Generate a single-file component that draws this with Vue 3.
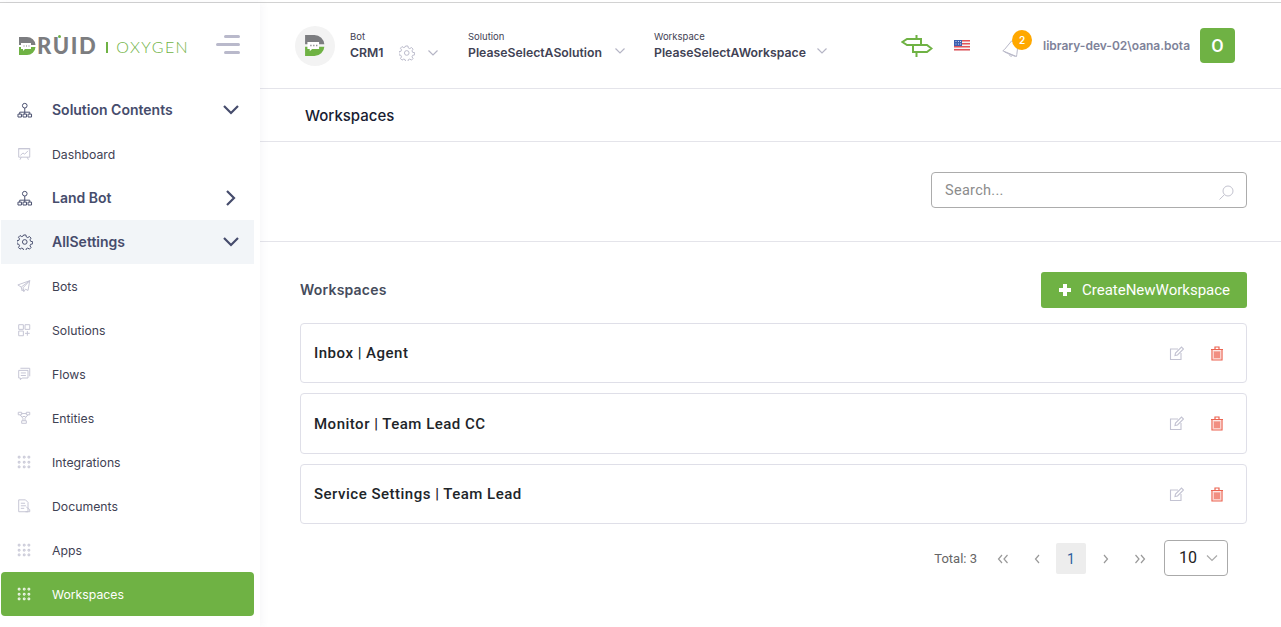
<script setup>
const icons = {
  org: 'M8 6.200a2.400 2.400 0 1 0 0-4.800a2.400 2.400 0 0 0 0 4.800zM8 6.200v4.300M2.800 12.500v-2h10.400v2M8 10.500v2M1 12.500h3.600v3H1zM6.200 12.500h3.600v3H6.200zM11.400 12.500H15v3h-3.600z',
  board: 'M2 2h13v10H2zM1.500 2h14M4 10l3-3 2 1.500L13 4.500M5 12l-1.500 3M12 12l1.500 3',
  gear: 'M6.800 1h2.400l.4 2 1.500.7 1.800-1.100 1.600 1.700-1.100 1.700.7 1.600 2 .3v2.300l-2 .4-.7 1.600 1.100 1.700-1.600 1.700-1.800-1.100-1.500.7-.4 2H6.800l-.4-2-1.500-.7-1.800 1.100-1.600-1.700 1.100-1.700-.7-1.600-2-.4V6.900l2-.3.7-1.600-1.100-1.700 1.600-1.700 1.800 1.100 1.500-.7zM8 10.600a2.400 2.400 0 1 0 0-4.800a2.400 2.400 0 0 0 0 4.800z',
  plane: 'M15 2 1 7l4 2.500L15 2 7 10.500l1 4.500 2-3 3 1.500zM5 9.500l1 4.500 2-2.500',
  grid: 'M2 2h5.500v5.500H2zM9.500 2H15v5.500H9.500zM2 9.500h5.500V15H2zM12.200 9.500V15M9.500 12.200H15',
  flow: 'M4 1.500h11v9.500M2 4h11v9H6l-2 2v-2H2zM4.500 7h6M4.500 10h6',
  entity: 'M1.500 1.500h4v3h-4zM11 1.500h4v3h-4zM5.500 3h5.500M3.500 4.500l3.500 4v3M13 4.500l-3.500 4v3M5.500 11.500h5.500v3H5.500zM6.500 6.500h3.500',
  dots: 'M1.500 1.500h2v2h-2zM7.500 1.500h2v2h-2zM13 1.500h2v2h-2zM1.500 7.500h2v2h-2zM7.500 7.500h2v2h-2zM13 7.500h2v2h-2zM1.500 13h2v2h-2zM7.500 13h2v2h-2zM13 13h2v2h-2z',
  doc: 'M2 1h8l3 3v11H2zM4.500 5h5M4.500 8h6M4.500 11h4M11 9.500l4 3v2.500h-5'
}

const menu = [
  { label: 'Solution Contents', icon: 'org', kind: 'group', arrow: 'down' },
  { label: 'Dashboard', icon: 'board' },
  { label: 'Land Bot', icon: 'org', kind: 'group', arrow: 'right' },
  { label: 'AllSettings', icon: 'gear', kind: 'group open', arrow: 'down' },
  { label: 'Bots', icon: 'plane' },
  { label: 'Solutions', icon: 'grid' },
  { label: 'Flows', icon: 'flow' },
  { label: 'Entities', icon: 'entity' },
  { label: 'Integrations', icon: 'dots' },
  { label: 'Documents', icon: 'doc' },
  { label: 'Apps', icon: 'dots' },
  { label: 'Workspaces', icon: 'dots', kind: 'active' }
]

const workspaces = ['Inbox | Agent', 'Monitor | Team Lead CC', 'Service Settings | Team Lead']
const arrowPaths = { down: 'M2 5l7 7 7-7', right: 'M5 2l7 7-7 7' }
</script>

<template>
  <div class="page">
    <div class="frame">
      <aside class="sidebar">
        <div class="brand">
          <div class="logo">
            <svg class="logo-d" viewBox="0 0 17 18" width="17" height="18">
              <path d="M0 0h8a8.500 8.500 0 0 1 8.500 8H0z" fill="#7c7d80" />
              <path d="M0 10h16.500A8.500 8.500 0 0 1 8 18H0z" fill="#6fb244" />
              <path d="M2 6h10v6H6l-2 2v-2H2z" fill="#fff" />
              <path d="M4.500 9h1M7 9h1M9.500 9h1" stroke="#7c7d80" stroke-width="1.200" />
            </svg>
            <span class="logo-word">RUID<i class="logo-dot"></i></span>
            <span class="logo-bar"></span>
            <span class="logo-sub">OXYGEN</span>
          </div>
          <div class="burger"><span class="short"></span><span></span><span class="short"></span></div>
        </div>
        <nav>
          <a v-for="item in menu" :key="item.label" class="item" :class="item.kind">
            <svg class="item-icon" viewBox="0 0 16.500 16.500" width="16" height="16"><path :d="icons[item.icon]" /></svg>
            <span class="item-label">{{ item.label }}</span>
            <svg v-if="item.arrow" class="item-arrow" viewBox="0 0 18 18" width="18" height="18"><path :d="arrowPaths[item.arrow]" /></svg>
          </a>
        </nav>
      </aside>

      <main class="main">
        <header class="topbar">
          <div class="bot-avatar">
            <svg viewBox="0 0 17 18" width="20" height="21">
              <path d="M0 0h8a8.500 8.500 0 0 1 8.500 8H0z" fill="#7c7d80" />
              <path d="M0 10h16.500A8.500 8.500 0 0 1 8 18H0z" fill="#6fb244" />
              <path d="M2 6h10v6H6l-2 2v-2H2z" fill="#fff" />
              <path d="M4.500 9h1M7 9h1M9.500 9h1" stroke="#7c7d80" stroke-width="1.200" />
            </svg>
          </div>
          <div class="picker bot">
            <small>Bot</small><b>CRM1</b>
          </div>
          <svg class="top-gear" viewBox="0 0 16.500 16.500" width="16" height="16"><path :d="icons.gear" /></svg>
          <svg class="chev first" viewBox="0 0 12 8" width="12" height="8"><path d="M1.500 1.500l4.500 4.500 4.500-4.500" /></svg>
          <div class="picker solution">
            <small>Solution</small><b>PleaseSelectASolution</b>
          </div>
          <svg class="chev" viewBox="0 0 12 8" width="12" height="8"><path d="M1.500 1.500l4.500 4.500 4.500-4.500" /></svg>
          <div class="picker workspace">
            <small>Workspace</small><b>PleaseSelectAWorkspace</b>
          </div>
          <svg class="chev" viewBox="0 0 12 8" width="12" height="8"><path d="M1.500 1.500l4.500 4.500 4.500-4.500" /></svg>

          <svg class="sign" viewBox="0 0 32 24" width="32" height="24">
            <path d="M15.500 1v4M15.500 17v6M6 5h14v6H6L1.500 8zM12 11h14l4.500 3.500L26 18H12z" />
          </svg>
          <svg class="flag" viewBox="0 0 16 11" width="16" height="11">
            <rect width="16" height="11" fill="#f4f4f4" />
            <path d="M0 .8h16M0 3.800h16M0 6.800h16M0 9.800h16" stroke="#e2535a" stroke-width="1.500" />
            <rect width="8" height="6" fill="#3c5fb0" />
            <path d="M1.500 1.500h1M4 1.500h1M6 1.500h1M1.500 4h1M4 4h1M6 4h1" stroke="#dfe6f7" stroke-width=".9" />
          </svg>
          <div class="bell">
            <svg viewBox="0 0 20 20" width="20" height="20">
              <path d="M9.500 4 2.500 12.500.8 13.800 14.500 19.500l.3-2 .8-6.500c.3-2.500-.5-4.500-2.500-5.700-1.600-1-3.300-.6-3.600-1.300zM2.500 15l11 4.500M7 17.500c.5 1.300 1.800 2 3 1.500" />
            </svg>
            <span class="badge">2</span>
          </div>
          <span class="username">library-dev-02\oana.bota</span>
          <div class="user-box">O</div>
        </header>

        <div class="title-row">Workspaces</div>

        <div class="search-row">
          <div class="search">
            <span>Search...</span>
            <svg viewBox="0 0 16 16" width="16" height="16"><path d="M10 11a5 5 0 1 0 0-10a5 5 0 0 0 0 10zM6.300 9.800 1.500 14.500" /></svg>
          </div>
        </div>

        <section class="content">
          <div class="content-head">
            <h2>Workspaces</h2>
            <button class="create">
              <svg viewBox="0 0 14 14" width="14" height="14"><path d="M5 1h4v4h4v4H9v4H5V9H1V5h4z" fill="#fff" /></svg>
              CreateNewWorkspace
            </button>
          </div>
          <div v-for="name in workspaces" :key="name" class="card">
            <span class="card-name">{{ name }}</span>
            <svg class="edit" viewBox="0 0 15 15" width="15" height="15"><path d="M9 3H1.500v10.500H12V7M6 9.500l.5-2.500L12.500 1l2 2-6 6z" /></svg>
            <svg class="trash" viewBox="0 0 12 15" width="12" height="15"><path class="bars" d="M2 4.500h8v9H2z" /><path d="M1 3.500h10V14H1zM0 3.500h12M4 3.500V1h4v2.500M4 5.500v6.500M6 5.500v6.500M8 5.500v6.500" /></svg>
          </div>
          <div class="pager">
            <span class="total">Total: 3</span>
            <svg class="pg first-pg" viewBox="0 0 12 10" width="12" height="10"><path d="M5 1 1.500 5 5 9M10.500 1 7 5l3.500 4" /></svg>
            <svg class="pg prev" viewBox="0 0 6 10" width="6" height="10"><path d="M5 1 1.500 5 5 9" /></svg>
            <span class="current">1</span>
            <svg class="pg next" viewBox="0 0 6 10" width="6" height="10"><path d="M1 1l3.500 4L1 9" /></svg>
            <svg class="pg last" viewBox="0 0 12 10" width="12" height="10"><path d="M1.500 1 5 5 1.500 9M7 1l3.500 4L7 9" /></svg>
            <div class="size">
              <span>10</span>
              <svg viewBox="0 0 12 8" width="12" height="8"><path d="M1 1.500l5 5 5-5" /></svg>
            </div>
          </div>
        </section>
      </main>
    </div>
  </div>
</template>

<style>
html, body { margin: 0; overflow: hidden; background: #fff; }
</style>

<style scoped>
.page {
  width: 1281px;
  height: 627px;
  box-sizing: border-box;
  padding-top: 2px;
  overflow: hidden;
  font-family: Inter, "Liberation Sans", sans-serif;
  background: #fff;
}
.frame {
  height: 625px;
  box-sizing: border-box;
  border-top: 1px solid #d2d2d2;
  display: flex;
}
.sidebar {
  width: 260px;
  flex: none;
  padding-left: 1px;
  box-sizing: border-box;
  background: #fff;
  box-shadow: 2px 0 8px rgba(80, 80, 110, .05);
  position: relative;
}
.brand {
  height: 85px;
  display: flex;
  align-items: center;
  justify-content: space-between;
  padding: 0 20px 0 18px;
}
.logo { display: flex; align-items: center; margin-top: 1px; }
.logo-d { display: block; }
.logo-word {
  position: relative;
  font: 900 22px/22px Lato, sans-serif;
  letter-spacing: 1.600px;
  color: #7c7d80;
  margin-left: 1px;
}
.logo-dot {
  position: absolute;
  left: 21px;
  top: 0;
  width: 3px;
  height: 3px;
  background: #6fb244;
  border-radius: 50%;
}
.logo-bar { width: 2px; height: 11px; background: #6fb244; margin: 3px 8px 0 9px; }
.logo-sub {
  font: 300 16px/20px Lato, sans-serif;
  letter-spacing: 1.400px;
  color: #6fb244;
  margin-top: 2px;
}
.burger { display: flex; flex-direction: column; align-items: flex-end; gap: 5px; width: 24px; margin-top: -2px; }
.burger span { display: block; height: 3px; width: 24px; background: #b9b9cb; border-radius: 2px; }
.burger .short { width: 16px; }
.item {
  width: 253px;
  height: 44px;
  display: flex;
  align-items: center;
  padding-left: 16px;
  box-sizing: border-box;
  border-radius: 4px;
  font-size: 12.250px;
  color: #3f4254;
}
.item-icon { flex: none; width: 14px; height: 14px; margin-right: 2px; }
.item-icon path { fill: none; stroke: #c4c4d4; stroke-width: 1.150; }
.item-label { margin-left: 19px; flex: 1; }
.item-arrow { margin-right: 14px; }
.item-arrow path { fill: none; stroke: #464c6c; stroke-width: 2.200; }
.group { font-size: 14px; font-weight: 600; color: #464c6c; }
.group .item-icon { width: 16px; height: 16px; margin-right: 0; }
.group .item-icon path { stroke: #464c6c; stroke-width: 1; }
.group .item-label { margin-top: -2px; }
.open { background: #f2f5f8; border-radius: 0; }
.active { background: #6fb244; color: #fff; }
.active .item-icon path { stroke: #fff; stroke-width: 1.150; }

.main { flex: 1; min-width: 0; }
.topbar {
  height: 86px;
  box-sizing: border-box;
  border-bottom: 1px solid #e4e4ea;
  display: flex;
  align-items: center;
  padding-left: 35px;
}
.bot-avatar {
  width: 40px;
  height: 40px;
  border-radius: 50%;
  background: #f3f3f3;
  display: flex;
  align-items: center;
  justify-content: center;
  flex: none;
}
.picker { display: flex; flex-direction: column; margin-top: 1px; }
.picker small { font-size: 9.500px; line-height: 13px; color: #3f4254; }
.picker b { font-size: 12.250px; line-height: 19px; font-weight: 600; color: #3f4254; white-space: nowrap; }
.picker.bot { margin-left: 15px; width: 49px; }
.picker.solution { margin-left: 29px; width: 146px; }
.picker.workspace { margin-left: 28px; width: 162px; }
.top-gear path { fill: none; stroke: #b9b9c9; stroke-width: 1; }
.top-gear { margin-top: 14px; }
.chev { margin-top: 10px; }
.chev.first { margin-left: 12px; margin-top: 14px; }
.chev path { fill: none; stroke: #b5b5c5; stroke-width: 1.200; }
.sign { margin-left: 73px; }
.sign path { fill: none; stroke: #6fb244; stroke-width: 2; }
.flag { margin-left: 21px; }
.bell { position: relative; margin-left: 32px; width: 20px; height: 20px; margin-top: 2px; }
.bell svg { display: block; }
.bell path { fill: none; stroke: #b8b8c8; stroke-width: 1; }
.badge {
  position: absolute;
  left: 10px;
  top: -7px;
  width: 20px;
  height: 20px;
  border-radius: 50%;
  background: #ffa800;
  color: #fff;
  font-size: 10px;
  font-weight: 600;
  line-height: 20px;
  text-align: center;
}
.username { margin-left: 21px; width: 157px; flex: none; font-size: 12px; font-weight: 600; color: #7e8299; white-space: nowrap; }
.user-box {
  width: 35px;
  height: 35px;
  background: #6fb244;
  border-radius: 4px;
  color: #fff;
  font: 500 18px Roboto, sans-serif;
  display: flex;
  align-items: center;
  justify-content: center;
  flex: none;
}
.title-row {
  height: 53px;
  box-sizing: border-box;
  border-bottom: 1px solid #e4e4ea;
  padding-left: 45px;
  display: flex;
  align-items: center;
  font-size: 15px;
  font-weight: 500;
  color: #181c32;
}
.search-row {
  height: 100px;
  box-sizing: border-box;
  border-bottom: 1px solid #e4e4ea;
  padding: 30px 34px 0 0;
  display: flex;
  justify-content: flex-end;
  align-items: flex-start;
}
.search {
  width: 316px;
  height: 36px;
  box-sizing: border-box;
  border: 1px solid #acacac;
  border-radius: 4px;
  display: flex;
  align-items: center;
  justify-content: space-between;
  padding: 0 12px 0 13px;
  font: 14.500px Roboto, sans-serif;
  letter-spacing: .3px;
  color: #8c8c8c;
}
.search svg { margin-top: 6px; }
.search path { fill: none; stroke: #c3c3cf; stroke-width: 1; }
.content { padding: 30px 34px 0 40px; }
.content-head {
  display: flex;
  align-items: center;
  justify-content: space-between;
  height: 36px;
  margin-bottom: 14.900px;
}
.content-head h2 { margin: 0 0 2px; font-size: 14px; font-weight: 600; color: #464c5c; letter-spacing: .2px; }
.create {
  width: 206px;
  height: 36px;
  border: 0;
  border-radius: 3px;
  background: #6fb244;
  color: #fff;
  font: 15px Roboto, sans-serif;
  display: flex;
  align-items: center;
  justify-content: center;
  gap: 10px;
  padding: 0;
}
.card {
  height: 60.500px;
  box-sizing: border-box;
  border: 1px solid #dfdfe8;
  border-radius: 4px;
  margin-bottom: 10px;
  display: flex;
  align-items: center;
  padding: 0 23px 0 13px;
}
.card-name { flex: 1; font: 500 15px Roboto, sans-serif; letter-spacing: .5px; color: #212529; }
.edit path { fill: none; stroke: #c3c3d2; stroke-width: 1.100; }
.trash { margin-left: 27px; }
.trash path { fill: none; stroke: #ec6350; stroke-width: 1.200; }
.trash .bars { fill: #fbd0ca; stroke: none; }
.pager {
  display: flex;
  align-items: center;
  height: 36px;
  margin-top: 15.600px;
  padding-right: 19px;
  justify-content: flex-end;
  font: 13px Roboto, sans-serif;
  color: #666;
}
.total, .pg { margin-top: 2px; }
.pg path { fill: none; stroke: #999; stroke-width: 1.200; }
.first-pg { margin-left: 20px; }
.prev { margin-left: 25px; }
.current {
  width: 30px;
  height: 31px;
  margin: 1px 0 0 16px;
  background: #ededed;
  border-radius: 2px;
  display: flex;
  align-items: center;
  justify-content: center;
  color: #2f5f9f;
  font-size: 14px;
  padding-top: 2px;
  box-sizing: border-box;
}
.next { margin-left: 17px; }
.last { margin-left: 25px; }
.size {
  width: 64px;
  height: 36px;
  box-sizing: border-box;
  margin-left: 18px;
  border: 1px solid #aaa;
  border-radius: 4px;
  display: flex;
  align-items: center;
  justify-content: space-between;
  padding: 0 9px 0 14px;
  font-size: 16px;
  color: #222;
}
.size path { fill: none; stroke: #aaa; stroke-width: 1.200; }
</style>
